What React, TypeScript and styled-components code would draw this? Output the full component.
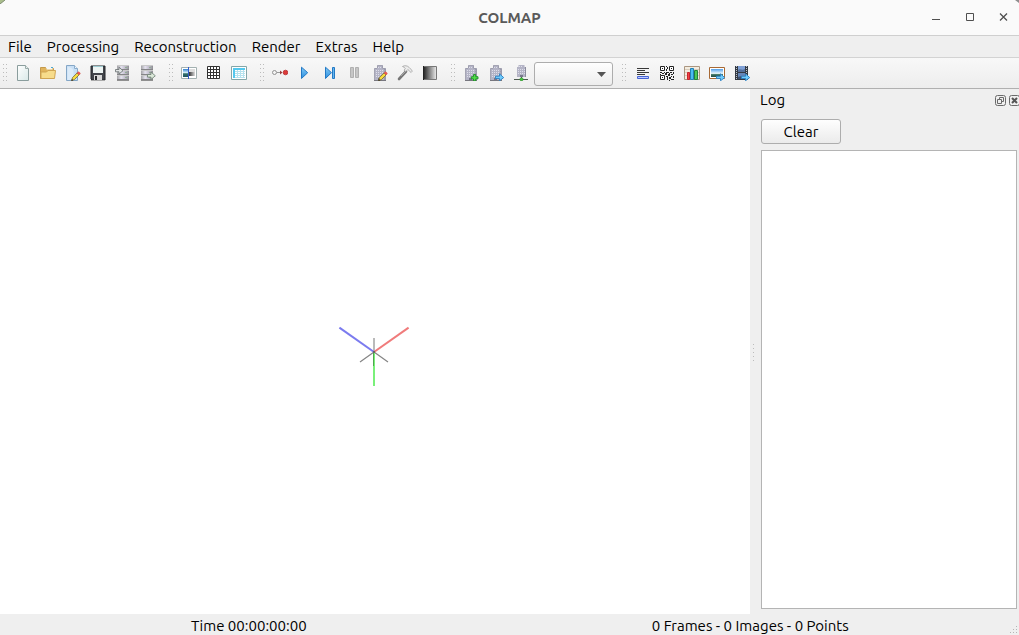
import React from "react";
import styled, { createGlobalStyle } from "styled-components";

const GlobalStyle = createGlobalStyle`
  * { box-sizing: border-box; }
  body {
    margin: 0;
    background: #efefef;
    color: #000;
    font-family: Ubuntu, "Noto Sans", sans-serif;
    font-size: 15px;
    line-height: 20px;
  }
  button, select, textarea { font: inherit; color: inherit; }
`;

const Window = styled.div`
  display: flex;
  flex-direction: column;
  min-height: 100vh;
`;

const TitleBar = styled.header`
  position: relative;
  display: flex;
  align-items: center;
  justify-content: center;
  height: 36px;
  background: #fafafa;
  border-bottom: 1px solid #cfcfcf;
`;

const Title = styled.h1`
  margin: 0;
  font-size: 15px;
  font-weight: 700;
  color: #5a5a5a;
`;

const Corner = styled.svg<{ $side: "left" | "right" }>`
  position: absolute;
  top: 0;
  ${(p) => p.$side}: 0;
`;

const WindowControls = styled.div`
  position: absolute;
  top: 0;
  right: 0;
  display: flex;
`;

const WindowButton = styled.button`
  display: grid;
  place-items: center;
  width: 34px;
  height: 34px;
  padding: 0;
  border: 0;
  background: none;

  &:last-child { width: 32px; }
`;

const MenuBar = styled.nav`
  display: flex;
  gap: 15px;
  height: 21px;
  padding: 0 8px;
`;

const MenuButton = styled.button`
  padding: 0;
  border: 0;
  background: none;
  line-height: 20px;
`;

const ToolBar = styled.div`
  display: flex;
  gap: 6px;
  height: 32px;
  padding-left: 1px;
  border-top: 1px solid #d3d3d3;
  border-bottom: 1px solid #b0b0b0;
  background: linear-gradient(#f8f8f8, #ededed);
`;

const ToolGroup = styled.div`
  display: flex;
  align-items: center;
`;

const Handle = styled.span`
  display: flex;
  width: 10px;
  height: 18px;
`;

const ToolButton = styled.button`
  display: flex;
  align-items: center;
  width: 25px;
  height: 26px;
  padding: 0 5px 0 4px;
  border: 0;
  background: none;

  svg { flex: none; display: block; }
`;

const SelectBox = styled.div`
  position: relative;
  width: 79px;
  height: 24px;
  margin: 2px 1px 0 0;

  svg {
    position: absolute;
    right: 7px;
    top: 10px;
    pointer-events: none;
  }
`;

const ModelSelect = styled.select`
  width: 100%;
  height: 100%;
  appearance: none;
  border: 1px solid #adadad;
  border-radius: 3px;
  background: linear-gradient(#fefefe, #ededed);
`;

const Workspace = styled.main`
  flex: 1;
  display: grid;
  grid-template-columns: minmax(0, 750fr) 10px minmax(0, 259fr);
`;

const Viewport = styled.section`
  display: grid;
  place-items: center;
  background: #fff;

  svg { display: block; }
`;

const Splitter = styled.div`
  display: flex;
  align-items: center;
  padding-left: 2px;
`;

const LogPanel = styled.aside`
  display: flex;
  flex-direction: column;
`;

const LogHeader = styled.div`
  display: flex;
  align-items: center;
  justify-content: space-between;
  height: 22px;
`;

const LogTitle = styled.h2`
  margin: 0;
  font-size: 15px;
  font-weight: 400;
`;

const DockButtons = styled.div`
  display: flex;
  gap: 3px;
  margin-right: -1px;
`;

const DockButton = styled.button`
  display: block;
  width: 11px;
  height: 11px;
  padding: 0;
  border: 0;
  background: none;

  svg { display: block; }
`;

const LogBody = styled.div`
  flex: 1;
  display: flex;
  flex-direction: column;
  align-items: flex-start;
  gap: 6px;
  padding: 8px 2px 5px 1px;
`;

const ClearButton = styled.button`
  width: 80px;
  height: 25px;
  padding: 0;
  border: 1px solid #adadad;
  border-radius: 3px;
  background: linear-gradient(#fefefe, #ebebeb);
  line-height: 20px;
`;

const LogText = styled.textarea`
  flex: 1;
  width: 100%;
  padding: 4px;
  border: 1px solid #b4b4b4;
  border-radius: 0;
  background: #fff;
  resize: none;
  outline: 0;
`;

const StatusBar = styled.footer`
  position: relative;
  display: grid;
  grid-template-columns: 1fr 1fr;
  gap: 4px;
  height: 21px;
  padding: 2px 20px 0 0;
  text-align: center;
`;

const Grip = styled.svg`
  position: absolute;
  right: 1px;
  bottom: 1px;
`;

function Svg({ children }: { children: React.ReactNode }) {
  return (
    <svg width="16" height="16" viewBox="0 0 16 16" fill="none" aria-hidden="true">
      {children}
    </svg>
  );
}

function Dots() {
  return (
    <Handle aria-hidden="true">
      <svg width="8" height="18" viewBox="0 0 8 18">
        {[0, 1, 2, 3, 4].map((i) => (
          <g key={i} fill="#bcbcbc">
            <rect x="2" y={i * 4} width="1" height="1" />
            <rect x="5" y={i * 4} width="1" height="1" />
          </g>
        ))}
      </svg>
    </Handle>
  );
}

const Pencil = () => (
  <>
    <path d="m6.6 15.6.9-3 4.6-4.7 2 2-4.6 4.6z" fill="#f6dc3f" stroke="#6d5a28" strokeWidth=".7" />
    <path d="m12 7.9 1.2-1.2q1.6.2 2.2 2L14.1 10z" fill="#ee5a50" stroke="#c94a44" strokeWidth=".4" />
    <path d="m6.4 15.8.5-1.7 1.2 1.1z" fill="#111" />
  </>
);

const Building = ({ x = 0 }: { x?: number }) => (
  <g transform={`translate(${x} 0)`}>
    <path d="M4 .5h6V3h2.5v12H1.5V3H4z" fill="#b4b4c6" />
    <path d="M4.5 3V.5h5V3M1.5 15V3.5H4M9.5 3.5h3V15" stroke="#9898a8" strokeWidth=".8" />
    <path d="M5 2.5h4M3 5.5h9M3 7.5h9M3 9.5h9M3 11.5h9" stroke="#dedeea" strokeDasharray="1 1" />
    <path d="M11 4h1.5v11H11z" fill="#8b8b9d" fillOpacity=".6" />
    <path d="M5 13h3v2H5z" fill="#77778b" />
    <path d="M1 15.5h12" stroke="#77777f" />
  </g>
);

const BlueArrow = () => (
  <path d="M7.5 11.2h4V8.8l4.2 3.8-4.2 3.2v-2.3h-4z" fill="#70ccfc" stroke="#2b7fc2" strokeWidth=".9" />
);

const Cabinet = ({ x = 0 }: { x?: number }) => (
  <g transform={`translate(${x} 0)`}>
    <defs>
      <linearGradient id="cabinet">
        <stop stopColor="#a3a3a6" /><stop offset=".35" stopColor="#e4e2ee" /><stop offset=".7" stopColor="#bdb9c8" /><stop offset="1" stopColor="#8e8e92" />
      </linearGradient>
    </defs>
    {[0, 5, 10].map((y) => (
      <g key={y}>
        <rect x="2" y={y} width="12" height="5" fill="url(#cabinet)" />
        <path d={`M2 ${y + 0.5}h12`} stroke="#c9c9c9" />
        <path d={`M2 ${y + 4.5}h12`} stroke="#858588" />
        <path d={`M10 ${y + 2.5}h2`} stroke="#8fae92" />
      </g>
    ))}
    <path d="M2 15.5h12" stroke="#909090" />
  </g>
);

const icons: Record<string, React.ReactNode> = {
  "New project": (
    <>
      <defs><linearGradient id="paper" x2="1" y2="1"><stop stopColor="#fff" /><stop offset="1" stopColor="#d9e9e8" /></linearGradient></defs>
      <path d="M2.5.5h8l3 3v12h-11z" fill="url(#paper)" stroke="#8a9d9d" />
      <path d="M10.5.5v3h3" fill="#e7efee" stroke="#9aaba9" />
    </>
  ),
  "Open project": (
    <>
      <path d="M.5 13.5v-11h5l1 1h7v10z" fill="#e0b45c" stroke="#c59a4c" />
      <path d="M6.5 2.5h6v2h-6z" fill="#f6f8f8" /><path d="M11 2.5h2" stroke="#4ea9ce" />
      <path d="M1 13.5V7h5.5L8 5.5h7.5l-1 8z" fill="#f7dc8b" stroke="#d0a553" />
    </>
  ),
  "Edit project": (
    <>
      <path d="M1.5.5h8l3 3v12h-11z" fill="#c8dff5" stroke="#84a6c6" />
      <path d="M2.5 2c3 0 5 1 6 4v9h-6z" fill="#dcebf9" />
      <path d="M9.5.5v3h3" fill="#eef6fd" stroke="#8aaccc" />
      <Pencil />
    </>
  ),
  "Save project": (
    <>
      <path d="M1 1h14v14H2l-1-1z" fill="#41444a" stroke="#24272b" />
      <path d="M3 1h10v7H3z" fill="#edf4f3" /><path d="M3 1.5h10" stroke="#9ccbd1" />
      <path d="M4 10h8v5H4z" fill="#d8d8d8" /><path d="M5 11h2v4H5z" fill="#25282b" />
      <path d="M1 15.5h14" stroke="#aaa" />
    </>
  ),
  "Import model": (
    <><Cabinet /><path d="M.5 4.5H4V2.2l4 3.5L4 9V6.8H.5z" fill="#e0e3e3" stroke="#747a7c" strokeWidth=".9" /></>
  ),
  "Export model": (
    <><Cabinet x={-1} /><path d="M7.5 9.5h3.5V7l4.3 3.8-4.3 3.7v-2.4H7.5z" fill="#dbe8d9" stroke="#76877b" strokeWidth=".9" /></>
  ),
  "Feature extraction": (
    <>
      <path d="M.5 2.5h15v11H.5z" fill="#fff" stroke="#a3b1b1" />
      <defs>
        <linearGradient id="sky" x2="0" y2="1"><stop stopColor="#2f80cf" /><stop offset=".45" stopColor="#d5effb" /><stop offset=".6" stopColor="#34706a" /><stop offset="1" stopColor="#1e5663" /></linearGradient>
        <linearGradient id="grey"><stop stopColor="#333" /><stop offset="1" stopColor="#ddd" /></linearGradient>
      </defs>
      <path d="M2 4h6v8H2z" fill="url(#sky)" />
      <path d="M8 4h6v3H8z" fill="#ddd" /><path d="M8 7h6v4H8z" fill="url(#grey)" />
      <path d="M7.5 2v12" stroke="#315bcc" />
    </>
  ),
  "Feature matching": (
    <>
      <path d="M1.5 1.5h12v12h-12z" fill="#fff" stroke="#333" />
      <path d="M4.5 1v13M7.5 1v13M10.5 1v13M1 4.5h13M1 7.5h13M1 10.5h13" stroke="#333" />
    </>
  ),
  "Database management": (
    <>
      <path d="M.5 1.5h15v13H.5z" fill="#fff" stroke="#83a6a8" />
      <path d="M2 3h12v2H2zM2 5h2v8H2z" fill="#54c8ee" />
      <path d="M4 6.5h10M4 8.5h10M4 10.5h10M4 12.5h10M6.5 5v8M9.5 5v8M12.5 5v8" stroke="#b5e2ee" />
    </>
  ),
  "Automatic reconstruction": (
    <>
      <path d="M5 7.5h3" stroke="#999" />
      <circle cx="2.5" cy="7.5" r="2" fill="#f4f4f4" stroke="#929292" />
      <path d="m8 5.5 2.5 2L8 9.5z" fill="#993e3e" />
      <circle cx="13.5" cy="7.5" r="2.3" fill="#dd3a39" stroke="#b52c2e" strokeWidth=".8" />
    </>
  ),
  "Start reconstruction": (
    <>
      <defs><linearGradient id="play" x2="0" y2="1"><stop stopColor="#83caf7" /><stop offset="1" stopColor="#2a8ddd" /></linearGradient></defs>
      <path d="m4.5 2.2 6.2 5.5-6.2 5.8z" fill="url(#play)" stroke="#2379c5" />
    </>
  ),
  "Reconstruct next image": (
    <><path d="m3.5 2.2 6 5.5-6 5.8z" fill="url(#play)" stroke="#2379c5" /><path d="M10.5 2.5h2v11h-2z" fill="#65b6ee" stroke="#2379c5" /></>
  ),
  "Pause reconstruction": (
    <g fill="#c6c6c6" stroke="#b0b0b0"><path d="M3.5 2.5h3v10h-3zM8.5 2.5h3v10h-3z" /></g>
  ),
  "Reconstruction options": <><Building x={1} /><Pencil /></>,
  "Bundle adjustment": (
    <>
      <path d="m2 14 7-7.5" stroke="#777" strokeWidth="2.6" strokeLinecap="round" /><path d="m4 11 5-5" stroke="#a5a5a5" />
      <path d="M5.5 1.5c2-1.4 5-.8 6.5.8l1.8 1.8 1.5 2-1.2 1.4-3.3-3-1.9 2L7 5.2l1.4-1.7C7.5 2.4 6.5 2 5.5 1.5z" fill="#ececec" stroke="#999" strokeWidth=".7" />
    </>
  ),
  "Dense reconstruction": (
    <>
      <defs><linearGradient id="shade"><stop stopColor="#222" /><stop offset="1" stopColor="#eee" /></linearGradient></defs>
      <path d="M1.5 1.5h13v13h-13z" fill="url(#shade)" stroke="#777" /><path d="M1.5 1v14" stroke="#222" />
    </>
  ),
  "Add model": (
    <><Building x={1} /><path d="M10.5 9.5h2.2v2.2H15v2.2h-2.3v2h-2.2v-2H8.3v-2.2h2.2z" fill="#4fe046" stroke="#1f8a2a" strokeWidth=".9" /></>
  ),
  "Export selected model": <><Building x={1} /><BlueArrow /></>,
  "Model network": (
    <>
      <path d="M5.5 0h6v2H13v10H4V2h1.5z" fill="#b4b4c6" />
      <path d="M6 1.5h4M5 4.5h7M5 6.5h7M5 8.5h7" stroke="#dedeea" strokeDasharray="1 1" />
      <path d="M12 2h1v10h-1z" fill="#8b8b9d" /><path d="M7 10h3v2H7z" fill="#77778b" />
      <path d="M1 14.5h14" stroke="#4d5a50" /><path d="M8.5 12v2" stroke="#555" /><circle cx="8.5" cy="14.3" r="1.6" fill="#44c83b" stroke="#287d2b" strokeWidth=".6" />
    </>
  ),
  "Show log": (
    <>
      <path d="M3 3.5h12M3 5.5h8M3 7.5h12M3 9.5h8" stroke="#383838" />
      <path d="M3.5 11.5h11v2h-11z" fill="#bfcaff" stroke="#4563d4" />
    </>
  ),
  "Match matrix": (
    <>
      <path d="M1.5 1.5h4v4h-4zM10.5 1.5h4v4h-4zM1.5 10.5h4v4h-4z" fill="#fff" stroke="#222" />
      <path d="M3 3h1v1H3zM12 3h1v1h-1zM3 12h1v1H3zM7 1h1v1H7zM8 2h1v2H8zM7 4h1v2H7zM1 7h2v1H1zM3 8h2v1H3zM5 7h1v1H5zM7 7h3v1H7zM6 8h2v2H6zM10 8h1v1h-1zM11 7h2v1h-2zM14 7h1v2h-1zM12 9h2v1h-2zM9 9h2v2H9zM7 11h2v1H7zM8 12h1v3H8zM10 12h2v2h-2zM12 11h1v1h-1zM14 11h1v2h-1zM12 14h3v1h-3zM10 15h1v1h-1zM1 9h1v1H1z" fill="#222" />
    </>
  ),
  "Reconstruction statistics": (
    <>
      <path d="M.5 1.5h15v13H.5z" fill="#f3ecdf" stroke="#ab9681" /><path d="M1 4.5h14M1 7.5h14M1 10.5h14" stroke="#d8cdbd" />
      <path d="M3.5 7.5h2v7h-2z" fill="#f04343" stroke="#c9252c" />
      <path d="M6.5 3.5h3v11h-3z" fill="#4bbcf0" stroke="#2480b5" />
      <path d="M10.5 5.5h3v9h-3z" fill="#4cc755" stroke="#25813c" />
    </>
  ),
  "Grab image": (
    <>
      <path d="M.5 2.5h15v11H.5z" fill="#fff" stroke="#a76935" />
      <defs><linearGradient id="photo" x2="0" y2="1"><stop stopColor="#4e9de8" /><stop offset=".55" stopColor="#eaf7fd" /><stop offset=".7" stopColor="#3c7260" /><stop offset="1" stopColor="#234d48" /></linearGradient></defs>
      <path d="M2 4h12v8H2z" fill="url(#photo)" /><BlueArrow />
    </>
  ),
  "Grab movie": (
    <>
      <path d="M1 1h13v14H1z" fill="#333943" />
      <path d="M2.5 1v14M12.5 1v14" stroke="#c0c5cc" strokeDasharray="1 1" />
      <path d="M4 1h7v6H4z" fill="#7fa0d6" /><path d="M4 5c2-2 4 1 7-1v3H4z" fill="#536f9c" />
      <path d="M4 8h7v6H4z" fill="#6585b8" /><path d="M4 12c2-1 4-1 7 0v2H4z" fill="#3c506f" /><BlueArrow />
    </>
  ),
};

const groups = [
  ["New project", "Open project", "Edit project", "Save project", "Import model", "Export model"],
  ["Feature extraction", "Feature matching", "Database management"],
  ["Automatic reconstruction", "Start reconstruction", "Reconstruct next image", "Pause reconstruction", "Reconstruction options", "Bundle adjustment", "Dense reconstruction"],
  ["Add model", "Export selected model", "Model network"],
  ["Show log", "Match matrix", "Reconstruction statistics", "Grab image", "Grab movie"],
];

const menus = ["File", "Processing", "Reconstruction", "Render", "Extras", "Help"];

export default function App() {
  return (
    <>
      <GlobalStyle />
      <Window>
        <TitleBar>
          <Corner $side="left" width="5" height="4" aria-hidden="true">
            <path d="M0 0h5L0 4z" fill="#a9bd8b" /><path d="M5 0 0 4" stroke="#7e8c70" />
          </Corner>
          <Corner $side="right" width="4" height="3" aria-hidden="true"><path d="M0 0h4v3z" fill="#8d8d8d" /></Corner>
          <Title>COLMAP</Title>
          <WindowControls>
            <WindowButton aria-label="Minimize">
              <svg width="10" height="10"><path d="M1 7.5h8" stroke="#4f4f4f" /></svg>
            </WindowButton>
            <WindowButton aria-label="Maximize">
              <svg width="10" height="10"><path d="M1.5 1.5h7v7h-7z" fill="none" stroke="#4f4f4f" /></svg>
            </WindowButton>
            <WindowButton aria-label="Close">
              <svg width="10" height="10"><path d="m2 1.5 7 7m0-7-7 7" stroke="#4f4f4f" strokeWidth="1.3" /></svg>
            </WindowButton>
          </WindowControls>
        </TitleBar>
        <MenuBar aria-label="Main menu">
          {menus.map((m) => <MenuButton key={m}>{m}</MenuButton>)}
        </MenuBar>
        <ToolBar role="toolbar" aria-label="Tools">
          {groups.map((group, i) => (
            <ToolGroup key={i}>
              <Dots />
              {group.map((name) => (
                <ToolButton key={name} aria-label={name}><Svg>{icons[name]}</Svg></ToolButton>
              ))}
              {i === 3 && (
                <SelectBox>
                  <ModelSelect aria-label="Model" />
                  <svg width="9" height="5" aria-hidden="true"><path d="M0 0h9L4.5 5z" fill="#555" /></svg>
                </SelectBox>
              )}
            </ToolGroup>
          ))}
        </ToolBar>
        <Workspace>
          <Viewport aria-label="Model viewer">
            <svg width="80" height="79" viewBox="0 0 80 79" fill="none" aria-hidden="true">
              <path d="M39 40V26" stroke="#bababa" strokeWidth="2" />
              <path d="M39 40 25 50M39 40l14 10" stroke="#858585" strokeWidth="1.2" />
              <path d="M39 40v34" stroke="#7af07a" strokeWidth="2" />
              <path d="M38.5 40v14" stroke="#4fa64f" />
              <path d="M39 40 4.4 15.6" stroke="#7b7bef" strokeWidth="2" />
              <path d="M39 40 73.6 15.6" stroke="#f07b7b" strokeWidth="2" />
              <path d="M38 39h2v2h-2z" fill="#666" />
            </svg>
          </Viewport>
          <Splitter aria-hidden="true">
            <svg width="4" height="18">
              {[1, 5, 9, 13, 17].map((y) => <rect key={y} x="1" y={y} width="1" height="1" fill="#bcbcbc" />)}
            </svg>
          </Splitter>
          <LogPanel>
            <LogHeader>
              <LogTitle>Log</LogTitle>
              <DockButtons>
                <DockButton aria-label="Float log">
                  <svg width="11" height="11" fill="none" stroke="#6a6a6a">
                    <rect x=".5" y=".5" width="10" height="10" rx="2" /><path d="M4.5 4V2.5h4v4H7M2.5 4.5h4v4h-4z" />
                  </svg>
                </DockButton>
                <DockButton aria-label="Close log">
                  <svg width="11" height="11" fill="none" stroke="#6a6a6a">
                    <rect x=".5" y=".5" width="10" height="10" rx="2" /><path d="m3 3 5 5m0-5-5 5" stroke="#555" strokeWidth="2" />
                  </svg>
                </DockButton>
              </DockButtons>
            </LogHeader>
            <LogBody>
              <ClearButton>Clear</ClearButton>
              <LogText aria-label="Log output" readOnly />
            </LogBody>
          </LogPanel>
        </Workspace>
        <StatusBar>
          <span>Time 00:00:00:00</span>
          <span>0 Frames - 0 Images - 0 Points</span>
          <Grip width="8" height="8" aria-hidden="true">
            <path d="M6 0h1v1H6zM3 3h1v1H3zM6 3h1v1H6zM0 6h1v1H0zM3 6h1v1H3zM6 6h1v1H6z" fill="#b5b5b5" />
          </Grip>
        </StatusBar>
      </Window>
    </>
  );
}
